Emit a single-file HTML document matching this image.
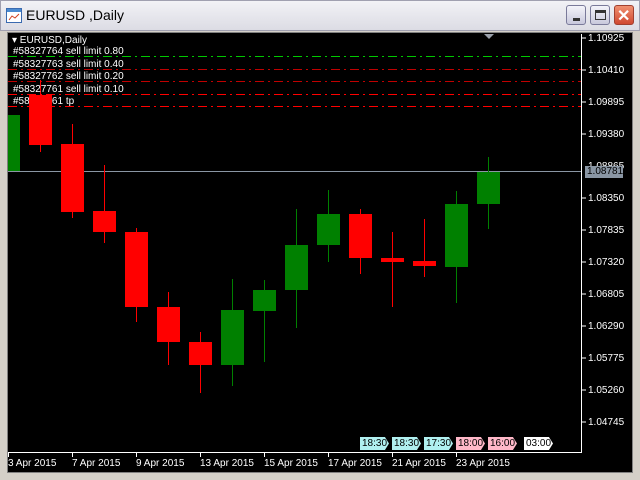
<!DOCTYPE html>
<html><head><meta charset="utf-8"><style>
*{margin:0;padding:0;box-sizing:border-box}
body{width:640px;height:480px;overflow:hidden;background:#d4d0c8;font-family:"Liberation Sans",sans-serif;position:relative}
.abs{position:absolute}
#title{left:0;top:0;width:640px;height:31px;background:linear-gradient(#f2f2f6,#dcdce4);border:1px solid #a0a0b0}
#tt{left:26px;top:7px;font-size:14px;color:#000}
.btn{top:5px;width:20px;height:20px;border:1px solid #7a7a9a;border-radius:3px;background:linear-gradient(#f4f4fa,#c8c8dc)}
#chart{left:7px;top:32px;width:626px;height:441px;background:#000;border:1px solid #808080}
.t{position:absolute;color:#fff;font-size:10px;white-space:nowrap;line-height:11px}
.tag{position:absolute;top:437px;height:13px;font-size:10px;line-height:13px;padding-left:2px;color:#000;width:29px;clip-path:polygon(0 0,86% 0,100% 50%,86% 100%,0 100%)}
</style></head><body>
<div id="title" class="abs"></div>
<svg class="abs" style="left:6px;top:8px" width="16" height="16"><rect x="0.5" y="0.5" width="15" height="14" fill="#fff" stroke="#3a6ab0"/><rect x="1" y="1" width="14" height="3" fill="#4a8ad0"/><polyline points="3,12 6,8 9,10 13,6" stroke="#d04020" fill="none"/></svg>
<div id="tt" class="abs">EURUSD ,Daily</div>
<div class="abs btn" style="left:566px"><div class="abs" style="left:6px;top:12px;width:7px;height:3px;background:#333"></div></div>
<div class="abs btn" style="left:590px"><div class="abs" style="left:4px;top:4px;width:11px;height:10px;border:1px solid #333;border-top-width:3px"></div></div>
<div class="abs btn" style="left:614px;background:linear-gradient(#f09070,#d04830);border-color:#a04030"><div class="abs" style="left:2px;top:0px;color:#fff;font-size:16px;font-weight:bold">✕</div></div>
<div id="chart" class="abs"></div>
<div class="abs" style="left:8px;top:34px;width:574px;height:419px;border-right:1px solid #fff;border-bottom:1px solid #fff"></div>
<div class="abs" style="left:484px;top:34px;width:0;height:0;border-left:5px solid transparent;border-right:5px solid transparent;border-top:5px solid #9aa0aa"></div>
<svg class="abs" style="left:0;top:0" width="640" height="480">
<g shape-rendering="crispEdges" stroke-dasharray="9,4,2,4">
<line x1="8" y1="56.5" x2="581" y2="56.5" stroke="#00c800"/>
<line x1="8" y1="69.5" x2="581" y2="69.5" stroke="#c00000"/>
<line x1="8" y1="81.5" x2="581" y2="81.5" stroke="#c00000"/>
<line x1="8" y1="94.5" x2="581" y2="94.5" stroke="#ff0000"/>
<line x1="8" y1="106.5" x2="581" y2="106.5" stroke="#ff0000"/>
</g>
<line x1="8" y1="171.5" x2="581" y2="171.5" stroke="#8a96a4" shape-rendering="crispEdges"/>
<g stroke-width="1" shape-rendering="crispEdges">
<rect x="8" y="115" width="12" height="56" fill="#008000"/>
<line x1="40.5" y1="80" x2="40.5" y2="152" stroke="#f00"/><rect x="29" y="95" width="23" height="50" fill="#f00"/>
<line x1="72.5" y1="124" x2="72.5" y2="218" stroke="#f00"/><rect x="61" y="144" width="23" height="68" fill="#f00"/>
<line x1="104.5" y1="165" x2="104.5" y2="243" stroke="#f00"/><rect x="93" y="211" width="23" height="21" fill="#f00"/>
<line x1="136.5" y1="228" x2="136.5" y2="322" stroke="#f00"/><rect x="125" y="232" width="23" height="75" fill="#f00"/>
<line x1="168.5" y1="292" x2="168.5" y2="365" stroke="#f00"/><rect x="157" y="307" width="23" height="35" fill="#f00"/>
<line x1="200.5" y1="332" x2="200.5" y2="393" stroke="#f00"/><rect x="189" y="342" width="23" height="23" fill="#f00"/>
<line x1="232.5" y1="279" x2="232.5" y2="386" stroke="#008000"/><rect x="221" y="310" width="23" height="55" fill="#008000"/>
<line x1="264.5" y1="280" x2="264.5" y2="362" stroke="#008000"/><rect x="253" y="290" width="23" height="21" fill="#008000"/>
<line x1="296.5" y1="209" x2="296.5" y2="328" stroke="#008000"/><rect x="285" y="245" width="23" height="45" fill="#008000"/>
<line x1="328.5" y1="190" x2="328.5" y2="262" stroke="#008000"/><rect x="317" y="214" width="23" height="31" fill="#008000"/>
<line x1="360.5" y1="209" x2="360.5" y2="274" stroke="#f00"/><rect x="349" y="214" width="23" height="44" fill="#f00"/>
<line x1="392.5" y1="232" x2="392.5" y2="307" stroke="#f00"/><rect x="381" y="258" width="23" height="4" fill="#f00"/>
<line x1="424.5" y1="219" x2="424.5" y2="277" stroke="#f00"/><rect x="413" y="261" width="23" height="5" fill="#f00"/>
<line x1="456.5" y1="191" x2="456.5" y2="303" stroke="#008000"/><rect x="445" y="204" width="23" height="63" fill="#008000"/>
<line x1="488.5" y1="157" x2="488.5" y2="229" stroke="#008000"/><rect x="477" y="172" width="23" height="32" fill="#008000"/>
</g>
<g stroke="#fff" shape-rendering="crispEdges">
<line x1="582" y1="38" x2="586" y2="38"/><line x1="582" y1="70" x2="586" y2="70"/><line x1="582" y1="102" x2="586" y2="102"/><line x1="582" y1="134" x2="586" y2="134"/><line x1="582" y1="198" x2="586" y2="198"/><line x1="582" y1="230" x2="586" y2="230"/><line x1="582" y1="262" x2="586" y2="262"/><line x1="582" y1="294" x2="586" y2="294"/><line x1="582" y1="326" x2="586" y2="326"/><line x1="582" y1="358" x2="586" y2="358"/><line x1="582" y1="390" x2="586" y2="390"/><line x1="582" y1="422" x2="586" y2="422"/>
<line x1="8.5" y1="453" x2="8.5" y2="457"/><line x1="72.5" y1="453" x2="72.5" y2="457"/><line x1="136.5" y1="453" x2="136.5" y2="457"/><line x1="200.5" y1="453" x2="200.5" y2="457"/><line x1="264.5" y1="453" x2="264.5" y2="457"/><line x1="328.5" y1="453" x2="328.5" y2="457"/><line x1="392.5" y1="453" x2="392.5" y2="457"/><line x1="456.5" y1="453" x2="456.5" y2="457"/>
</g>
</svg>
<div class="t" style="left:12px;top:35px">▾ EURUSD,Daily</div>
<div class="t" style="left:13px;top:46px">#58327764 sell limit 0.80</div>
<div class="t" style="left:13px;top:59px">#58327763 sell limit 0.40</div>
<div class="t" style="left:13px;top:71px">#58327762 sell limit 0.20</div>
<div class="t" style="left:13px;top:84px">#58327761 sell limit 0.10</div>
<div class="t" style="left:13px;top:96px">#58327761 tp</div>
<div class="abs" style="left:29px;top:95px;width:23px;height:12px;background:#f00"></div>
<div class="t" style="left:588px;top:33px">1.10925</div>
<div class="t" style="left:588px;top:65px">1.10410</div>
<div class="t" style="left:588px;top:97px">1.09895</div>
<div class="t" style="left:588px;top:129px">1.09380</div>
<div class="t" style="left:588px;top:161px">1.08865</div>
<div class="t" style="left:585px;top:166px;background:#8a96a4;width:38px;height:12px;padding-left:2px;color:#000">1.08781</div>
<div class="t" style="left:588px;top:193px">1.08350</div>
<div class="t" style="left:588px;top:225px">1.07835</div>
<div class="t" style="left:588px;top:257px">1.07320</div>
<div class="t" style="left:588px;top:289px">1.06805</div>
<div class="t" style="left:588px;top:321px">1.06290</div>
<div class="t" style="left:588px;top:353px">1.05775</div>
<div class="t" style="left:588px;top:385px">1.05260</div>
<div class="t" style="left:588px;top:417px">1.04745</div>
<div class="t" style="left:8px;top:458px">3 Apr 2015</div>
<div class="t" style="left:72px;top:458px">7 Apr 2015</div>
<div class="t" style="left:136px;top:458px">9 Apr 2015</div>
<div class="t" style="left:200px;top:458px">13 Apr 2015</div>
<div class="t" style="left:264px;top:458px">15 Apr 2015</div>
<div class="t" style="left:328px;top:458px">17 Apr 2015</div>
<div class="t" style="left:392px;top:458px">21 Apr 2015</div>
<div class="t" style="left:456px;top:458px">23 Apr 2015</div>
<div class="tag" style="left:360px;background:#b0f0f0">18:30</div>
<div class="tag" style="left:392px;background:#b0f0f0">18:30</div>
<div class="tag" style="left:424px;background:#b0f0f0">17:30</div>
<div class="tag" style="left:456px;background:#ffb8c8">18:00</div>
<div class="tag" style="left:488px;background:#ffb8c8">16:00</div>
<div class="tag" style="left:524px;background:#fff">03:00</div>
</body></html>
